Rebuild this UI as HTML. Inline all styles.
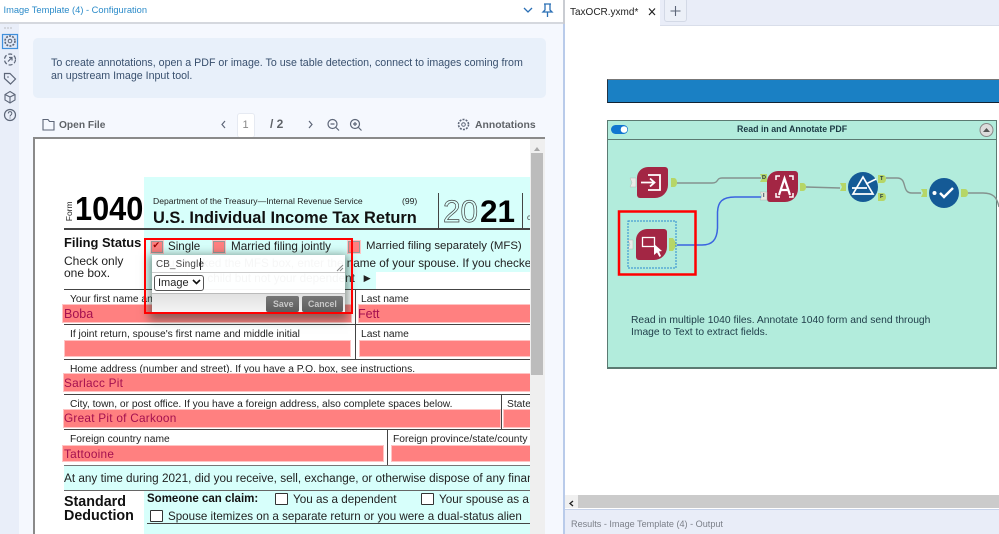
<!DOCTYPE html>
<html><head><meta charset="utf-8">
<style>
html,body{margin:0;padding:0;width:999px;height:534px;overflow:hidden;background:#fff;font-family:"Liberation Sans",sans-serif}
#root{position:relative;width:999px;height:534px;overflow:hidden;filter:blur(.3px)}
.a{position:absolute}
.t{position:absolute;white-space:nowrap;line-height:1}
.f{position:absolute;background:#ff8080;box-shadow:0 0 0 1px #ffc4c4}
.l{position:absolute;background:#444}
.v{position:absolute;color:#a5104f;font-size:12.5px;line-height:1;white-space:nowrap}
.cb{position:absolute;width:11px;height:10px;border:1px solid #333;background:#fff;border-radius:1px}
.pk{position:absolute;width:10px;height:10px;background:#ff8080;border:1px solid #999;box-shadow:0 0 0 1px #ffc4c4}
.lb{font-size:10.25px;color:#222}
.p{position:absolute;font-size:5.5px;font-weight:bold;color:#234;line-height:1}
</style></head><body><div id="root">

<!-- left panel -->
<div class="a" style="left:0;top:0;width:563px;height:22px;background:#fff"></div>
<div class="a" style="left:0;top:22px;width:563px;height:2px;background:#d5d8de"></div>
<div class="a" style="left:0;top:24px;width:19px;height:510px;background:#e9eef9"></div>
<div class="a" style="left:19px;top:24px;width:544px;height:510px;background:#f5f8fe"></div>
<div class="t" style="left:3.5px;top:6px;font-size:9.3px;color:#2b8bc9">Image Template (4) - Configuration</div>
<div class="a" style="left:33px;top:38px;width:513px;height:60px;background:#e8f0fa;border-radius:5px"></div>
<div class="t" style="left:51px;top:56.500px;font-size:10.65px;line-height:13px;color:#39506e">To create annotations, open a PDF or image. To use table detection, connect to images coming from<br>an upstream Image Input tool.</div>

<div class="t" style="left:59px;top:120.500px;font-size:10.2px;font-weight:bold;color:#5f6368">Open File</div>
<div class="a" style="left:237px;top:113px;width:16px;height:23px;background:#fff;border:1px solid #e6eaf2;border-radius:3px"></div>
<div class="t" style="left:242.500px;top:120px;font-size:11px;color:#888">1</div>
<div class="t" style="left:270px;top:118px;font-size:12px;font-weight:bold;color:#5f6368">/ 2</div>
<div class="t" style="left:475px;top:120.500px;font-size:10.4px;font-weight:bold;color:#5f6368">Annotations</div>

<!-- form viewer -->
<div class="a" style="left:33px;top:137px;width:512px;height:397px;background:#fff;border-left:2px solid #8a8a8a;border-top:2px solid #8a8a8a;box-sizing:border-box"></div>
<div class="a" style="left:530px;top:139px;width:15px;height:395px;background:#efefef"></div>
<div class="a" style="left:531px;top:153px;width:12px;height:222px;background:#bcbcbc"></div>
<div class="a" style="left:534px;top:144px;width:0;height:0;border:3.5px solid transparent;border-bottom:4px solid #a8a8a8"></div>

<div class="a" id="form" style="left:35px;top:139px;width:495px;height:395px;overflow:hidden">
  <div style="position:absolute;left:-35px;top:-139px;width:999px;height:534px">
    <div class="a" style="left:144px;top:177px;width:386px;height:95px;background:#d7fffb"></div>
    <div class="a" style="left:144px;top:272px;width:232px;height:17px;background:#d7fffb"></div>
    <div class="a" style="left:64px;top:465px;width:466px;height:25px;background:#d7fffb"></div>
    <div class="a" style="left:144px;top:490px;width:386px;height:44px;background:#d7fffb"></div>

    <div class="t" style="left:59px;top:207px;font-size:8.5px;color:#222;transform:rotate(-90deg);transform-origin:center;width:20px">Form</div>
    <div class="t" style="left:75px;top:192px;font-size:33px;font-weight:bold;color:#000;transform:scaleX(.93);transform-origin:left">1040</div>
    <div class="t" style="left:153px;top:197px;font-size:8.6px;color:#222">Department of the Treasury—Internal Revenue Service</div>
    <div class="t" style="left:402px;top:197px;font-size:8.6px;color:#222">(99)</div>
    <div class="t" style="left:153px;top:210px;font-size:16.4px;font-weight:bold;color:#111">U.S. Individual Income Tax Return</div>
    <div class="a" style="left:438px;top:193px;width:1px;height:36px;background:#444"></div>
    <div class="a" style="left:522px;top:193px;width:1px;height:36px;background:#444"></div>
    <div class="t" style="left:443px;top:196px;font-size:31.500px;color:#d7fffb;-webkit-text-stroke:.7px #444">20</div>
    <div class="t" style="left:480px;top:196px;font-size:31.500px;font-weight:bold;color:#000">21</div>
    <div class="t" style="left:527px;top:214px;font-size:8px;color:#444">c</div>
    <div class="l" style="left:64px;top:228px;width:466px;height:1.500px"></div>

    <div class="t" style="left:64px;top:237px;font-size:12.9px;font-weight:bold;color:#111">Filing Status</div>
    <div class="t" style="left:64px;top:255px;font-size:12px;color:#222">Check only</div>
    <div class="t" style="left:64px;top:267px;font-size:12px;color:#222">one box.</div>
    <div class="pk" style="left:151px;top:241px"></div>
    <div class="t" style="left:152.500px;top:241px;font-size:9px;color:#900">✔</div>
    <div class="t" style="left:168px;top:241px;font-size:11.6px;color:#222">Single</div>
    <div class="pk" style="left:213px;top:241px"></div>
    <div class="t" style="left:231px;top:241px;font-size:11.7px;color:#222">Married filing jointly</div>
    <div class="pk" style="left:348px;top:241px"></div>
    <div class="t" style="left:366px;top:241px;font-size:11.4px;color:#222">Married filing separately (MFS)</div>
    <div class="a" style="left:152px;top:255px;width:378px;height:34px;overflow:hidden">
      <div class="t" style="left:-6px;top:3px;font-size:11.7px;color:#222">If you checked the MFS box, enter the name of your spouse. If you checked</div>
      <div class="t" style="left:-5px;top:18px;font-size:11.7px;color:#222">person is a child but not your dependent &nbsp;►</div>
    </div>

    <div class="l" style="left:64px;top:289px;width:466px;height:1px"></div>
    <div class="l" style="left:355px;top:289px;width:1px;height:71px"></div>
    <div class="t lb" style="left:70px;top:295px">Your first name and middle initial</div>
    <div class="t lb" style="left:361px;top:295px">Last name</div>
    <div class="f" style="left:63px;top:305px;width:288px;height:17px"></div>
    <div class="f" style="left:359px;top:305px;width:171px;height:17px"></div>
    <div class="v" style="left:64px;top:308px">Boba</div>
    <div class="v" style="left:358px;top:308px">Fett</div>
    <div class="l" style="left:64px;top:324px;width:466px;height:1px"></div>
    <div class="t lb" style="left:70px;top:330px">If joint return, spouse's first name and middle initial</div>
    <div class="t lb" style="left:361px;top:330px">Last name</div>
    <div class="f" style="left:65px;top:341px;width:285px;height:15px"></div>
    <div class="f" style="left:360px;top:341px;width:170px;height:15px"></div>
    <div class="l" style="left:64px;top:359px;width:466px;height:1px"></div>
    <div class="t lb" style="left:70px;top:365px">Home address (number and street). If you have a P.O. box, see instructions.</div>
    <div class="f" style="left:64px;top:374px;width:466px;height:17px"></div>
    <div class="v" style="left:64px;top:378px;font-size:11.8px;letter-spacing:.25px">Sarlacc Pit</div>
    <div class="l" style="left:64px;top:394px;width:466px;height:1px"></div>
    <div class="l" style="left:501px;top:394px;width:1px;height:36px"></div>
    <div class="t lb" style="left:70px;top:400px">City, town, or post office. If you have a foreign address, also complete spaces below.</div>
    <div class="t lb" style="left:507px;top:400px">State</div>
    <div class="f" style="left:64px;top:410px;width:436px;height:17px"></div>
    <div class="f" style="left:504px;top:410px;width:26px;height:17px"></div>
    <div class="v" style="left:64px;top:412.500px;font-size:11.8px;letter-spacing:.25px">Great Pit of Carkoon</div>
    <div class="l" style="left:64px;top:429px;width:466px;height:1px"></div>
    <div class="l" style="left:387px;top:430px;width:1px;height:35px"></div>
    <div class="t lb" style="left:70px;top:435px">Foreign country name</div>
    <div class="t lb" style="left:393px;top:435px">Foreign province/state/county</div>
    <div class="f" style="left:63px;top:446px;width:320px;height:15px"></div>
    <div class="f" style="left:392px;top:446px;width:138px;height:15px"></div>
    <div class="v" style="left:64px;top:449px;font-size:11.8px;letter-spacing:.25px">Tattooine</div>
    <div class="l" style="left:64px;top:465px;width:466px;height:1px;background:#777"></div>
    <div class="t" style="left:64px;top:473px;font-size:11.75px;color:#222">At any time during 2021, did you receive, sell, exchange, or otherwise dispose of any financial interest</div>
    <div class="l" style="left:64px;top:490px;width:466px;height:1px;background:#666"></div>
    <div class="t" style="left:64px;top:494.500px;font-size:14.3px;font-weight:bold;color:#111">Standard</div>
    <div class="t" style="left:64px;top:509px;font-size:14.3px;font-weight:bold;color:#111">Deduction</div>
    <div class="t" style="left:147px;top:494px;font-size:11.5px;font-weight:bold;color:#111">Someone can claim:</div>
    <div class="cb" style="left:274.500px;top:493px"></div>
    <div class="t" style="left:293px;top:494px;font-size:11.7px;color:#222">You as a dependent</div>
    <div class="cb" style="left:420.500px;top:493px"></div>
    <div class="t" style="left:439px;top:494px;font-size:11.7px;color:#222">Your spouse as a dependent</div>
    <div class="cb" style="left:150px;top:510px"></div>
    <div class="t" style="left:168px;top:511px;font-size:11.6px;color:#222">Spouse itemizes on a separate return or you were a dual-status alien</div>
    <div class="l" style="left:147px;top:523px;width:383px;height:1px"></div>

    <!-- popup -->
    <div class="a" style="left:152px;top:255px;width:193px;height:59px;background:rgba(255,255,255,.96);box-shadow:0 3px 9px 3px rgba(40,60,50,.55)"></div>
    <div class="a" style="left:152px;top:272px;width:193px;height:1px;background:#ccc"></div>
    <div class="a" style="left:152px;top:293px;width:193px;height:21px;background:linear-gradient(#e2e2e2,#f6f6f6);border-top:1px solid #bbb;box-sizing:border-box"></div>
    <div class="t" style="left:156px;top:260px;font-size:9.8px;letter-spacing:.2px;color:#444">CB_Single</div>
    <div class="a" style="left:200px;top:258px;width:1px;height:12px;background:#222"></div>
    <svg class="a" style="left:336px;top:264px" width="8" height="8"><path d="M1 7L7 1M4 7L7 4" stroke="#888" fill="none"/></svg>
    <div class="a" style="left:154px;top:275px;width:48px;height:14px;background:#fff;border:1px solid #555;border-radius:3px"></div>
    <div class="t" style="left:158px;top:278px;font-size:11px;color:#222">Image</div>
    <svg class="a" style="left:192px;top:279px" width="9" height="6"><path d="M1 1L4.500 4.500L8 1" stroke="#111" stroke-width="1.600" fill="none"/></svg>
    <div class="a" style="left:266px;top:296px;width:33px;height:16px;background:linear-gradient(#777,#5d5d5d);border-radius:2px"></div>
    <div class="a" style="left:302px;top:296px;width:41px;height:16px;background:linear-gradient(#777,#5d5d5d);border-radius:2px"></div>
    <div class="t" style="left:273px;top:300px;font-size:8.8px;font-weight:bold;color:#c8c8c8">Save</div>
    <div class="t" style="left:308px;top:300px;font-size:8.8px;font-weight:bold;color:#c8c8c8">Cancel</div>
    <div class="a" style="left:144px;top:238px;width:209px;height:76px;border:2.500px solid #f00;box-sizing:border-box"></div>
  </div>
</div>

<!-- right pane -->
<div class="a" style="left:563px;top:0;width:2px;height:534px;background:#b9cbea"></div>
<div class="a" style="left:563px;top:0;width:2px;height:24px;background:#c9ccd2"></div>
<div class="a" style="left:660px;top:0;width:339px;height:26px;background:#e9edf8;border-bottom:1px solid #d9deea;box-sizing:border-box"></div>
<div class="a" style="left:664px;top:-2px;width:23px;height:24px;background:#ecf0f8;border:1px solid #d3d9e6;border-radius:3px;box-sizing:border-box"></div>
<div class="t" style="left:570px;top:8px;font-size:10px;color:#222">TaxOCR.yxmd*</div>
<div class="a" style="left:607px;top:79px;width:392px;height:24px;background:#1a80c4;border-top:1px solid #777;border-bottom:1.500px solid #123;border-left:1px solid #234;box-sizing:border-box"></div>
<div class="a" style="left:607px;top:120px;width:390px;height:249px;background:#b2ecdc;border:1px solid #5b7a72;border-bottom-width:2px;box-sizing:border-box"></div>
<div class="a" style="left:608px;top:139px;width:388px;height:1px;background:#5b7a72"></div>
<div class="t" style="left:737px;top:125px;font-size:8.8px;font-weight:bold;color:#1c3a44">Read in and Annotate PDF</div>
<div class="t" style="left:631px;top:314.500px;font-size:10.3px;line-height:12.3px;color:#1e3c48">Read in multiple 1040 files. Annotate 1040 form and send through<br>Image to Text to extract fields.</div>
<div class="a" style="left:565px;top:495px;width:434px;height:13px;background:#cbcbcb"></div>
<div class="a" style="left:565px;top:495px;width:13px;height:13px;background:#f0f0f0"></div>
<div class="a" style="left:565px;top:509px;width:434px;height:25px;background:#e9edf8;border-top:1px solid #c7d3ea;box-sizing:border-box"></div>
<div class="t" style="left:571px;top:520px;font-size:9.1px;color:#7b7f88">Results - Image Template (4) - Output</div>

<div class="a" style="left:637px;top:167px;width:31px;height:31px;background:#a32644;border-radius:11px 3px 13px 3px"></div>
<div class="a" style="left:767px;top:171px;width:31px;height:31px;background:#a32644;border-radius:11px 3px 13px 3px"></div>
<div class="a" style="left:636px;top:229px;width:31px;height:31px;background:#a32644;border-radius:11px 3px 13px 3px"></div>
<div class="a" style="left:848px;top:172px;width:30px;height:30px;background:#145a96;border-radius:50%"></div>
<div class="a" style="left:929px;top:178px;width:30px;height:30px;background:#145a96;border-radius:50%"></div>

<svg class="a" style="left:0;top:0" width="999" height="534" viewBox="0 0 999 534" fill="none">
  <!-- top icons -->
  <path d="M524 8L528 12L532 8" stroke="#2a6fb5" stroke-width="1.300"/>
  <path d="M544 4H551M545 4V10L543 12H552L550 10V4M547.500 12V17" stroke="#2a6fb5" stroke-width="1.300"/>
  <!-- rail -->
  <circle cx="5" cy="28" r=".6" fill="#999"/><circle cx="8" cy="28" r=".6" fill="#999"/><circle cx="11" cy="28" r=".6" fill="#999"/>
  <rect x="2.500" y="34.500" width="15" height="14" stroke="#3f8fdc" stroke-width="1.200" fill="#dfe8f8"/>
  <circle cx="10" cy="41" r="5" stroke="#5d6678" stroke-width="1.600" stroke-dasharray="2 1.200"/><circle cx="10" cy="41" r="1.800" stroke="#5d6678"/>
  <circle cx="10" cy="59.500" r="5.500" stroke="#5d6678" stroke-width="1.200" stroke-dasharray="4 2"/><path d="M8 61.500L12 57.500M9 57.500H12V60.500" stroke="#5d6678" stroke-width="1.200"/>
  <path d="M4.500 73.500H10L15.500 79L10.500 84L4.500 78.500Z" stroke="#5d6678" stroke-width="1.200"/><circle cx="8" cy="77" r=".8" fill="#5d6678"/>
  <path d="M10 91.500L15 94.500V100L10 103L5 100V94.500ZM5 94.500L10 97L15 94.500M10 97V103" stroke="#5d6678" stroke-width="1.100"/>
  <circle cx="10" cy="115" r="5.500" stroke="#5d6678" stroke-width="1.200"/><path d="M8.300 113.500C8.300 111 11.800 111 11.800 113.500C11.800 115 10 115 10 116.500M10 117.500V118.500" stroke="#5d6678"/>
  <!-- toolbar -->
  <path d="M43 119.500H48L49.500 121.500H54V130H43Z" stroke="#5d6678" stroke-width="1.100"/>
  <path d="M225 121L222 124.500L225 128" stroke="#5d6678" stroke-width="1.200"/>
  <path d="M309 121L312 124.500L309 128" stroke="#5d6678" stroke-width="1.200"/>
  <circle cx="332.500" cy="124" r="4.500" stroke="#5d6678" stroke-width="1.200"/><path d="M336 127.500L339 130.500M330.500 124H334.500" stroke="#5d6678" stroke-width="1.200"/>
  <circle cx="355" cy="124" r="4.500" stroke="#5d6678" stroke-width="1.200"/><path d="M358.500 127.500L361.500 130.500M353 124H357M355 122V126" stroke="#5d6678" stroke-width="1.200"/>
  <circle cx="463.500" cy="124.500" r="5" stroke="#5d6678" stroke-width="1.600" stroke-dasharray="2 1.200"/><circle cx="463.500" cy="124.500" r="1.800" stroke="#5d6678"/>
  <!-- tab icons -->
  <path d="M649 8.500L655 15M655 8.500L649 15" stroke="#222" stroke-width="1.200"/>
  <path d="M675.500 6V16M670.500 11H680.500" stroke="#5d6678" stroke-width="1.100"/>
  <!-- container controls -->
  <rect x="611" y="125" width="17" height="9" rx="4.500" fill="#1176d0"/><circle cx="624" cy="129.500" r="3.300" fill="#fff"/>
  <circle cx="986.500" cy="130" r="6.500" fill="#dcdcdc" stroke="#888"/><path d="M983 132L986.500 128L990 132Z" fill="#555"/>
  <!-- connections -->
  <path d="M677 183H712C719 183 716 178 722 178H761" stroke="#84928e" stroke-width="1.400"/>
  <path d="M806 187L840 188" stroke="#84928e" stroke-width="1.400"/>
  <path d="M886 178H897C908 178 901 193 912 193H921" stroke="#84928e" stroke-width="1.400"/>
  <path d="M968 193H983C993 193 997 197 999 207" stroke="#84928e" stroke-width="1.400"/>
  <path d="M677 245H702C712 245 717 240 717.500 228V212C718 202 722 197 735 197H761" stroke="#3a63e0" stroke-width="1.500"/>
  <!-- ports -->
  <path d="M630 178H636V187H630L632 182.500Z" fill="#e8ece8" stroke="#b5b8b5" stroke-width=".5"/>
  <path d="M671 178H674C678 178 678 187 674 187H671Z" fill="#b6d667"/>
  <path d="M760 174H767V182H760L762 178Z" fill="#b6d667"/>
  <path d="M760 192H767V200H760L762 196Z" fill="#e6e8e0" stroke="#aaa" stroke-width=".4"/>
  <path d="M800 183H803C807 183 807 191 803 191H800Z" fill="#b6d667"/>
  <path d="M840 183H846V191H840L842 187Z" fill="#b6d667"/>
  <path d="M878 175H883C887 175 887 183 883 183H878Z" fill="#b6d667"/>
  <path d="M878 193H883C887 193 887 201 883 201H878Z" fill="#b6d667"/>
  <path d="M921 189H927V197H921L923 193Z" fill="#b6d667"/>
  <path d="M961 189H965C969 189 969 197 965 197H961Z" fill="#b6d667"/>
  <path d="M628 240H633V249H628L630 244.500Z" fill="#e8ece8" stroke="#b5b8b5" stroke-width=".5"/>
  <path d="M669 238H673L677 244.500L673 251H669Z" fill="#b6d667"/>
  <!-- tool glyphs -->
  <path d="M648 175H660V190H648M641 182.500H654M650 178.500L654.500 182.500L650 186.500" stroke="#fff" stroke-width="1.800"/>
  <path d="M776 180V176H780M789 176H793V180M776 193V197H780M789 197H793V193" stroke="#fff" stroke-width="1.500"/>
  <path d="M779 195L784.500 178.500L790 195M781 190H788" stroke="#fff" stroke-width="2.200"/>
  <path d="M853 194H873L863 177ZM852 188H867M866 184L876 179" stroke="#fff" stroke-width="1.700"/>
  <circle cx="934.500" cy="193" r="2" fill="#fff"/><path d="M940 193L944 197L953 188" stroke="#fff" stroke-width="2.400"/>
  <rect x="642.500" y="237.500" width="12" height="9" stroke="#fff" stroke-width="1.300"/>
  <path d="M654 244L654 255L657 252.500L659.500 257L661 256L659 251.500L662 251Z" fill="#fff"/>
  <!-- selection -->
  <rect x="628" y="221" width="48" height="47" stroke="#2a8ad0" stroke-dasharray="2 1"/>
  <rect x="619" y="211.500" width="76.500" height="63" stroke="#f00" stroke-width="2.500"/>
  <path d="M573 501L570 503.500L573 506" stroke="#222" stroke-width="1.300"/>
</svg>
<div class="p" style="left:762px;top:175.500px">D</div>
<div class="p" style="left:763px;top:193.500px">I</div>
<div class="p" style="left:880px;top:176.500px">T</div>
<div class="p" style="left:880px;top:194.500px">F</div>
</div></body></html>
